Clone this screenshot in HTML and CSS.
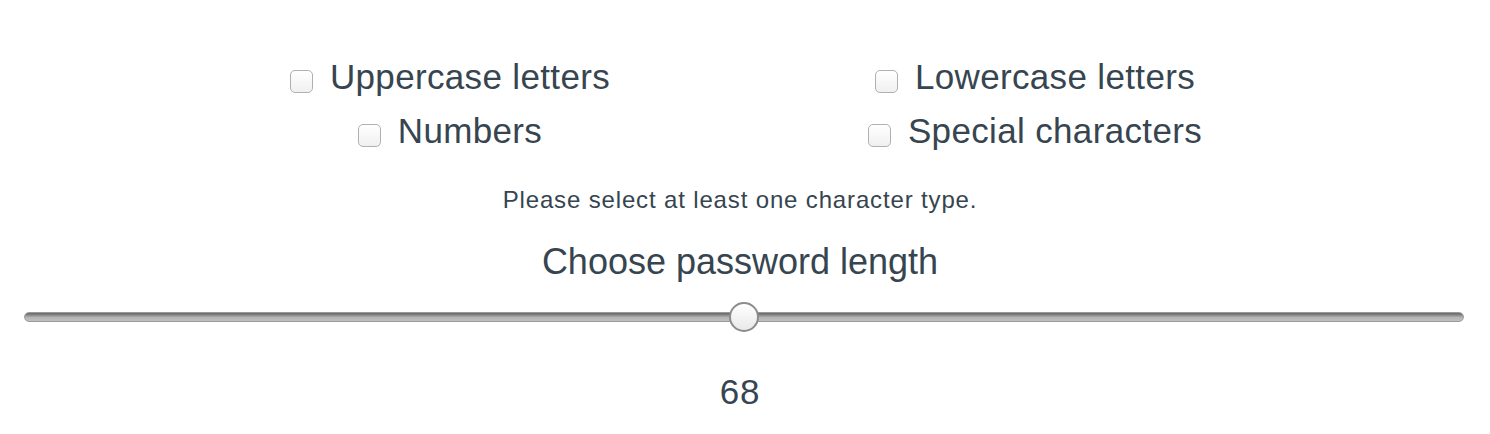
FILE: index.html
```html
<!DOCTYPE html>
<html lang="en">
<head>
<meta charset="utf-8">
<title>Password options</title>
<link rel="stylesheet" href="styles.css">
</head>
<body>
<main class="page">
  <div class="options">
    <label class="option"><input type="checkbox" class="check"><span>Uppercase letters</span></label>
    <label class="option"><input type="checkbox" class="check"><span>Lowercase letters</span></label>
    <label class="option"><input type="checkbox" class="check"><span>Numbers</span></label>
    <label class="option"><input type="checkbox" class="check"><span>Special characters</span></label>
  </div>
  <p class="hint">Please select at least one character type.</p>
  <h2 class="length-title">Choose password length</h2>
  <div class="slider-wrap">
    <input type="range" class="slider" min="8" max="128" value="68">
  </div>
  <p class="length-value">68</p>
</main>
</body>
</html>
```

FILE: styles.css
```css
* { box-sizing: border-box; }

body {
  margin: 0;
  background: #ffffff;
  color: #36454f;
  font-family: "Liberation Sans", Arial, Helvetica, sans-serif;
}

.page {
  padding-top: 57px;
  text-align: center;
}

.options {
  width: 1175px;
  padding-right: 5px;
  margin: 0 auto;
  display: grid;
  grid-template-columns: 1fr 1fr;
  row-gap: 14px;
}

.option {
  display: flex;
  justify-content: center;
  align-items: flex-start;
  gap: 17px;
  font-size: 35px;
  line-height: 40px;
  letter-spacing: 0.35px;
  cursor: pointer;
}

.check {
  -webkit-appearance: none;
  appearance: none;
  flex: none;
  margin: 13px 0 0 0;
  width: 23px;
  height: 23px;
  border: 1px solid #b0b0b0;
  border-radius: 5px;
  background: linear-gradient(#ffffff, #f0f0f0);
}

.hint {
  margin: 35px 0 0 0;
  padding-right: 10px;
  font-size: 24px;
  line-height: 28px;
  letter-spacing: 0.85px;
}

.length-title {
  margin: 28px 0 0 0;
  padding-right: 10px;
  font-size: 36px;
  font-weight: normal;
  line-height: 40px;
}

.slider-wrap {
  padding: 20px 26px 0 24px;
}

.slider {
  -webkit-appearance: none;
  appearance: none;
  display: block;
  width: 100%;
  height: 30px;
  margin: 0;
  background: transparent;
}

.slider::-webkit-slider-runnable-track {
  height: 10px;
  border-radius: 5px;
  background: linear-gradient(#676767 0%, #858585 25%, #b4b4b4 55%, #c0c0c0 100%);
  border: 1px solid #9a9a9a;
}

.slider::-webkit-slider-thumb {
  -webkit-appearance: none;
  appearance: none;
  width: 30px;
  height: 30px;
  margin-top: -11px;
  border-radius: 50%;
  border: 2px solid #8c8c8c;
  background: linear-gradient(#ffffff, #e9e9e9);
}

.length-value {
  margin: 40px 0 0 0;
  padding-right: 10px;
  font-size: 35px;
  line-height: 40px;
  letter-spacing: 0.8px;
}
```
